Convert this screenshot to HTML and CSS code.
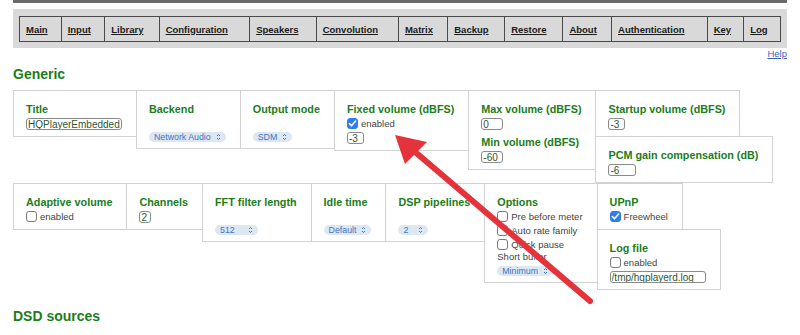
FILE: index.html
```html
<!DOCTYPE html>
<html>
<head>
	<meta charset="utf-8">
	<meta name="viewport" content="width=device-width, initial-scale=1">
	<title>HQPlayer Embedded - Configuration</title>
	<link rel="stylesheet" href="styles.css">
</head>
<body>

<div class="topbar"></div>

<div class="menu">
	<table class="menuT">
		<tr>
			<td><a href="#">Main</a></td>
			<td><a href="#">Input</a></td>
			<td><a href="#">Library</a></td>
			<td><a href="#">Configuration</a></td>
			<td><a href="#">Speakers</a></td>
			<td><a href="#">Convolution</a></td>
			<td><a href="#">Matrix</a></td>
			<td><a href="#">Backup</a></td>
			<td><a href="#">Restore</a></td>
			<td><a href="#">About</a></td>
			<td><a href="#">Authentication</a></td>
			<td><a href="#">Key</a></td>
			<td><a href="#">Log</a></td>
		</tr>
	</table>
</div>
<div class="help"><a href="#">Help</a></div>

<h2 class="sect">Generic</h2>

<div class="row">
	<div class="box">
		<label class="lbl">Title</label>
		<input class="txt w-xl" type="text" value="HQPlayerEmbedded">
	</div>
	<div class="box">
		<label class="lbl">Backend</label>
		<div class="sel">Network Audio <svg width="5" height="8" viewBox="0 0 5 8"><path d="M1 3L2.5 1.5L4 3M1 5L2.5 6.5L4 5"/></svg></div>
	</div>
	<div class="box">
		<label class="lbl">Output mode</label>
		<div class="sel">SDM <svg width="5" height="8" viewBox="0 0 5 8"><path d="M1 3L2.5 1.5L4 3M1 5L2.5 6.5L4 5"/></svg></div>
	</div>
	<div class="box">
		<label class="lbl">Fixed volume (dBFS)</label>
		<div class="chk"><span class="cb on"><svg width="11" height="11" viewBox="0 0 11 11"><path d="M2.4 5.6L4.5 7.8L8.6 3"/></svg></span>enabled</div>
		<input class="txt w-s" type="text" value="-3">
	</div>
	<div class="box">
		<label class="lbl">Max volume (dBFS)</label>
		<input class="txt w-m" type="text" value="0">
		<label class="lbl gap">Min volume (dBFS)</label>
		<input class="txt w-m" type="text" value="-60">
	</div>
	<div class="col">
		<div class="box">
			<label class="lbl">Startup volume (dBFS)</label>
			<input class="txt w-s" type="text" value="-3">
		</div>
		<div class="box">
			<label class="lbl">PCM gain compensation (dB)</label>
			<input class="txt w-l" type="text" value="-6">
		</div>
	</div>
</div>

<div class="row">
	<div class="box">
		<label class="lbl">Adaptive volume</label>
		<div class="chk"><span class="cb"></span>enabled</div>
	</div>
	<div class="box">
		<label class="lbl">Channels</label>
		<input class="txt w-xs" type="text" value="2">
	</div>
	<div class="box">
		<label class="lbl">FFT filter length</label>
		<div class="sel wide">512 <svg width="5" height="8" viewBox="0 0 5 8"><path d="M1 3L2.5 1.5L4 3M1 5L2.5 6.5L4 5"/></svg></div>
	</div>
	<div class="box">
		<label class="lbl">Idle time</label>
		<div class="sel">Default <svg width="5" height="8" viewBox="0 0 5 8"><path d="M1 3L2.5 1.5L4 3M1 5L2.5 6.5L4 5"/></svg></div>
	</div>
	<div class="box">
		<label class="lbl">DSP pipelines</label>
		<div class="sel mid">2 <svg width="5" height="8" viewBox="0 0 5 8"><path d="M1 3L2.5 1.5L4 3M1 5L2.5 6.5L4 5"/></svg></div>
	</div>
	<div class="box">
		<label class="lbl">Options</label>
		<div class="chk"><span class="cb"></span>Pre before meter</div>
		<div class="chk"><span class="cb"></span>Auto rate family</div>
		<div class="chk"><span class="cb"></span>Quick pause</div>
		<div class="note">Short buffer</div>
		<div class="sel tight">Minimum <svg width="5" height="8" viewBox="0 0 5 8"><path d="M1 3L2.5 1.5L4 3M1 5L2.5 6.5L4 5"/></svg></div>
	</div>
	<div class="col">
		<div class="box">
			<label class="lbl">UPnP</label>
			<div class="chk"><span class="cb on"><svg width="11" height="11" viewBox="0 0 11 11"><path d="M2.4 5.6L4.5 7.8L8.6 3"/></svg></span>Freewheel</div>
		</div>
		<div class="box">
			<label class="lbl">Log file</label>
			<div class="chk"><span class="cb"></span>enabled</div>
			<input class="txt w-xl" type="text" value="/tmp/hqplayerd.log">
		</div>
	</div>
</div>

<h2 class="sect next">DSD sources</h2>

<!-- annotation arrow drawn over the page -->
<svg class="arrow" width="800" height="335" viewBox="0 0 800 335">
	<line x1="590" y1="301" x2="414" y2="151" stroke="#e5333c" stroke-width="6" stroke-linecap="round"/>
	<polygon points="395,135 405,164 427,142" fill="#e5333c"/>
</svg>

</body>
</html>
```

FILE: styles.css
```css
*,*:after,*:before{box-sizing: border-box;}
body{
	margin: 0;
	padding: 0 13px;
	position: relative;
	background: #fff;
	color: #333;
	font-family: "Liberation Sans", Arial, sans-serif;
}

.topbar{height: 3px; background: #6b6b6b;}

.menu{margin-top: 6px; background: #d9d9d9; padding: 7px 6px 6px;}
.menuT{width: 100%; border-collapse: collapse; border: 1px solid #4a4a4a;}
.menuT td{
	border: 1px solid #4a4a4a;
	height: 25px;
	padding: 0 6px;
	font-size: 9.5px;
	font-weight: bold;
	white-space: nowrap;
}
.menuT a{color: #1a1a1a;}

.help{text-align: right; font-size: 9.5px; line-height: 11px;}
.help a{color: #3d5fc4;}

.sect{font-size: 14px; line-height: 16px; color: #1b7d1b; margin: 7px 0 8px;}
.sect.next{margin-top: 18px;}

.row{display: flex; align-items: flex-start;}
.col{display: flex; flex-direction: column; align-items: flex-start; margin-left: -1px;}

.box{
	border: 1px solid #d2d2d2;
	padding: 11px 14px 6px 12px;
	margin-left: -1px;
	background: #fff;
}
.row > .box:first-child{margin-left: 0;}
.col .box{margin-left: 0;}
.col .box + .box{margin-top: -1px;}

.lbl{
	display: block;
	font-size: 10.8px;
	font-weight: bold;
	line-height: 14px;
	color: #1b7d1b;
	white-space: nowrap;
}
.lbl.gap{margin-top: 5px;}

.txt{
	display: block;
	margin-top: 2px;
	height: 12px;
	border: 1px solid #8a8a8a;
	border-radius: 3px;
	padding: 0 1px;
	background: #fff;
	color: #2f552f;
	font: 10px "Liberation Sans", Arial, sans-serif;
	outline: none;
}
.w-xs{width: 12px;}
.w-s{width: 17px;}
.w-m{width: 22px;}
.w-l{width: 28px;}
.w-xl{width: 96px;}

.chk{
	display: flex;
	align-items: center;
	gap: 3px;
	height: 13px;
	margin-top: 1px;
	font-size: 9.5px;
	color: #444;
	white-space: nowrap;
}
.cb{
	flex: none;
	width: 11px;
	height: 11px;
	border: 1px solid #7a7a7a;
	border-radius: 3px;
	background: #fff;
}
.cb.on{background: #2f7cf0; border-color: #2f7cf0;}
.cb svg{display: block; margin: -1px;}
.cb path{fill: none; stroke: #fff; stroke-width: 1.6; stroke-linecap: round; stroke-linejoin: round;}

.note{font-size: 9.5px; line-height: 12px; color: #444;}

.sel{
	display: flex;
	align-items: center;
	justify-content: space-between;
	gap: 5px;
	width: max-content;
	height: 10px;
	margin-top: 16px;
	padding: 0 5px;
	border-radius: 5px;
	background: #dde7f2;
	color: #3b76c4;
	font-size: 8.8px;
	white-space: nowrap;
}
.sel svg{flex: none; display: block;}
.sel path{fill: none; stroke: #3b76c4; stroke-width: 1;}
.sel.wide{width: 43px;}
.sel.mid{width: 30px;}
.sel.tight{margin-top: 3px;}

.arrow{position: absolute; top: 0; left: 0; pointer-events: none; z-index: 10;}
```
